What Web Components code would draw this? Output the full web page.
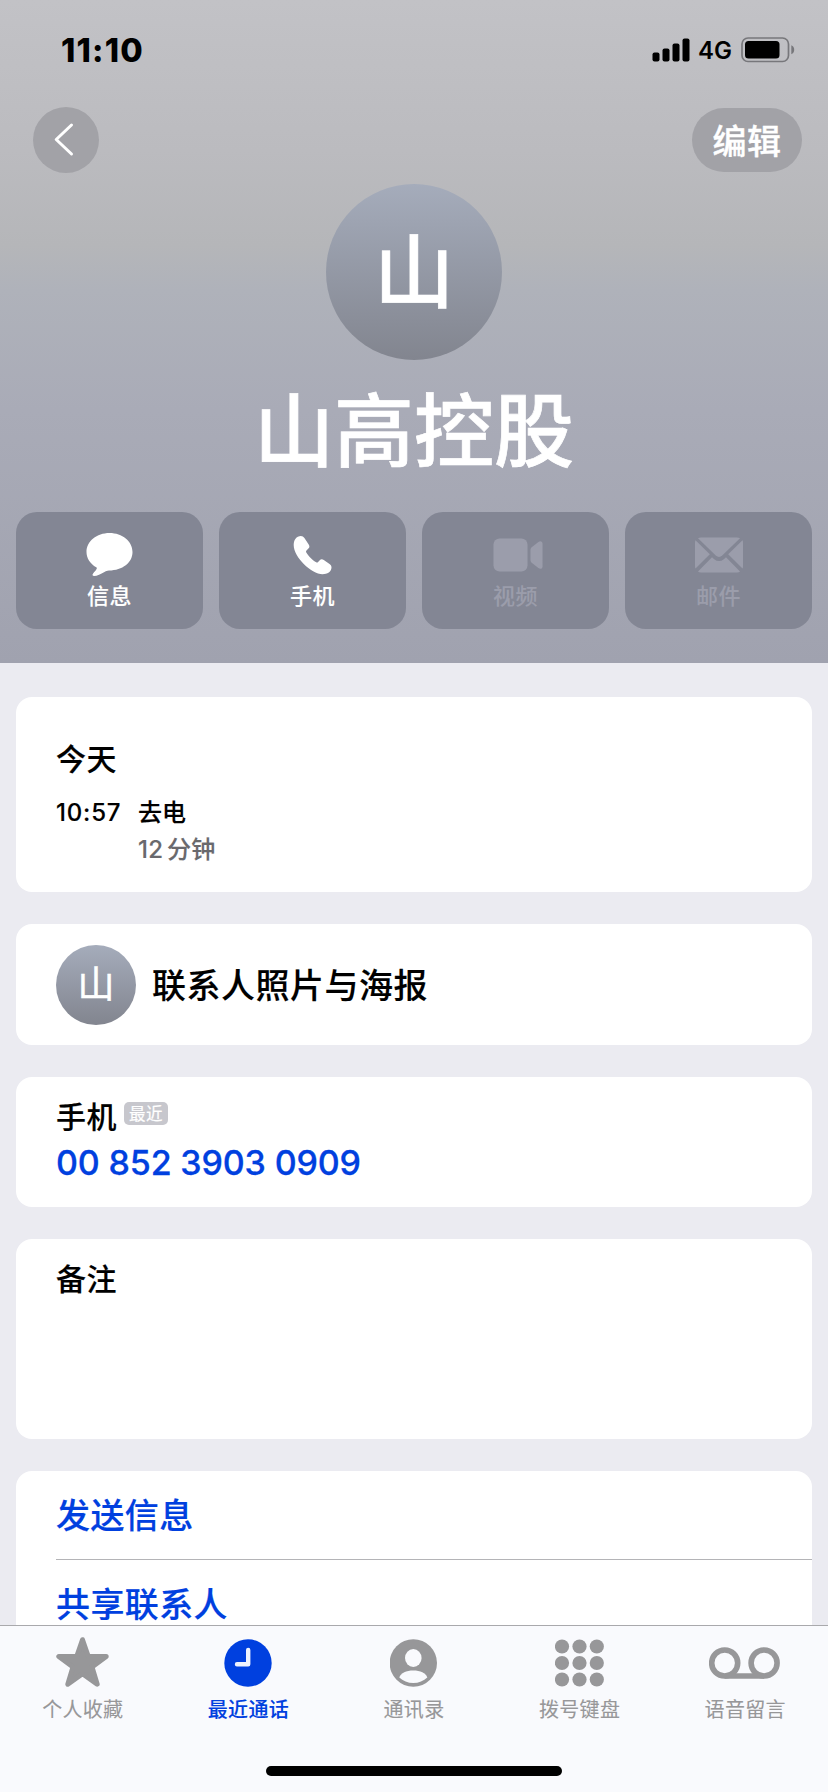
<!DOCTYPE html>
<html lang="zh-CN">
<head>
<meta charset="utf-8">
<meta name="viewport" content="width=device-width, initial-scale=1">
<title>山高控股</title>
<style>
	html, body {
		margin: 0;
		padding: 0;
	}

	body {
		--blue: #0040df;
		--gray: #979799;
		background: #ebebf1;
		color: #000;
		font-family: Inter, "Noto Sans CJK SC", sans-serif;
		height: 1792px;
		overflow: hidden;
	}
</style>
</head>
<body>
<contact-screen>
	<contact-header slot="header" name="山高控股">
		<status-bar slot="status" time="11:10" network="4G"></status-bar>
		<nav-bar slot="nav">编辑</nav-bar>
		<contact-avatar slot="avatar">山</contact-avatar>
		<action-button icon="message">信息</action-button>
		<action-button icon="phone">手机</action-button>
		<action-button icon="video" disabled>视频</action-button>
		<action-button icon="mail" disabled>邮件</action-button>
	</contact-header>

	<info-card style="--h: 195px">
		<call-log day="今天" time="10:57" kind="去电"><span>12</span> 分钟</call-log>
	</info-card>
	<info-card style="--h: 121px">
		<poster-row>
			<contact-avatar slot="avatar" small>山</contact-avatar>
			联系人照片与海报
		</poster-row>
	</info-card>
	<info-card style="--h: 130px">
		<phone-row label="手机" badge="最近">00 852 3903 0909</phone-row>
	</info-card>
	<info-card style="--h: 200px">
		<note-row>备注</note-row>
	</info-card>
	<info-card style="--h: 240px">
		<link-row>发送信息</link-row>
		<link-row>共享联系人</link-row>
	</info-card>

	<tab-bar slot="tabs">
		<tab-item icon="star">个人收藏</tab-item>
		<tab-item icon="clock" active>最近通话</tab-item>
		<tab-item icon="person">通讯录</tab-item>
		<tab-item icon="keypad">拨号键盘</tab-item>
		<tab-item icon="voicemail">语音留言</tab-item>
	</tab-bar>
</contact-screen>

<script>
const icons = {
	message: `<svg width="48" height="46" viewBox="0.5 0 48 46" fill="currentColor">
		<path d="M24 1C36.800 1 47 9.300 47 20C47 30.700 37 38.300 23.500 38.500C21.400 38.600 20.400 39.100 18.500 40.200C15.600 42 11.500 44 8.700 44C6.900 44 6.500 42.600 7.600 41.400C9.200 39.700 10.600 38.300 11.300 36.600C11.500 36 11.300 35.700 10.700 35.300C4.700 31.800 1 26.300 1 20C1 9.300 11.200 1 24 1Z"/></svg>`,
	phone: `<svg width="40" height="40" viewBox="0.500 0 40 40" fill="currentColor">
		<path d="M2.500 4.400C4 2.200 6.600 1.100 8.300 1.100C9.900 1.100 11 1.800 11.900 3.100L16.200 9.400C17.300 11.100 17.100 12.300 15.900 13.500L14 15.400C13.400 16 13.400 16.700 13.800 17.400C14.700 19.100 16.600 21.300 18.200 22.900C19.800 24.500 22 26.300 23.700 27.200C24.400 27.600 25 27.500 25.600 26.900L27 25.400C28.300 24 29.700 23.900 31.300 25L37 29C38.400 30 39 31 39 32.400C39 34 38 36.300 36.300 37.600C34.600 38.800 32.400 39.200 30 39.200C24.500 39.200 16.800 34.500 11.500 29.200C6 23.700 1.200 16.100 1.200 10.200C1.200 8 1.500 5.900 2.500 4.400Z"/></svg>`,
	video: `<svg width="54" height="34" viewBox="-4 0 54 34" fill="currentColor">
		<rect x="0.500" y="0.500" width="34" height="33" rx="6"/>
		<path d="M37.500 12C37.500 10.800 37.900 10 38.700 9.300L45.400 3.900C47.300 2.400 49.500 3.200 49.500 5.600V28.400C49.500 30.800 47.300 31.600 45.400 30.100L38.700 24.700C37.900 24 37.500 23.200 37.500 22Z"/></svg>`,
	mail: `<svg width="50" height="36" viewBox="0 0 50 36" fill="currentColor">
		<path d="M4 1.200Q5.300.500 7 .500H43Q44.700.500 46 1.200L28.200 18.600Q25 21.500 21.800 18.600Z"/>
		<path d="M1.500 3.300L15.800 17.300L1.500 31.600Q1 31.200 1 29V6Q1 4 1.500 3.300Z"/>
		<path d="M48.500 3.300L34.200 17.300L48.500 31.600Q49 31.200 49 29V6Q49 4 48.500 3.300Z"/>
		<path d="M4 34.500L18 20.200L20.200 22.200Q25 26 29.800 22.200L32 20.200L46 34.500Q45 35.500 43 35.500H7Q5 35.500 4 34.500Z"/></svg>`,
	star: `<svg width="54" height="52" viewBox="0.500 0 54 52" fill="currentColor" stroke="currentColor" stroke-width="5" stroke-linejoin="round">
		<path d="M27 2.700L32.700 19.400H50.700L36.500 30L41.700 47.200L27 36.800L12.300 47.200L17.500 30L3.300 19.400H21.300Z"/></svg>`,
	clock: `<svg width="48" height="48" viewBox="0 0 48 48">
		<circle cx="24" cy="24" r="23.700" fill="currentColor"/>
		<path d="M24.200 11V25.200H13" fill="none" stroke="#eef3fe" stroke-width="4.400" stroke-linecap="round" stroke-linejoin="round"/></svg>`,
	person: `<svg width="48" height="48" viewBox="0.700 0 48 48">
		<circle cx="24" cy="24" r="23.700" fill="currentColor"/>
		<ellipse cx="24" cy="19" rx="8.300" ry="9" fill="#f9fafd"/>
		<path d="M10 38.500C11.600 34.200 17 31.600 24 31.600C31 31.600 36.400 34.200 38 38.500C34.400 42 29.400 44 24 44C18.600 44 13.600 42 10 38.500Z" fill="#f9fafd"/></svg>`,
	keypad: `<svg width="50" height="48" viewBox="1 0 50 48" fill="currentColor">
		${[8, 25.5, 42.8].map(x => [7.5, 24, 40.5].map(y => `<circle cx="${x}" cy="${y}" r="7.100"/>`).join('')).join('')}</svg>`,
	voicemail: `<svg width="72" height="48" viewBox="0.500 0 72 48" fill="none" stroke="currentColor" stroke-width="5.600">
		<circle cx="16.200" cy="24" r="13"/>
		<circle cx="55.600" cy="24" r="13"/>
		<path d="M16.200 37H55.600"/></svg>`
};

class BaseElement extends HTMLElement {
	constructor() {
		super();
		this.shadow = this.attachShadow({mode: 'open'});
	}

	connectedCallback() {
		this.shadow.innerHTML = this.template;
	}

	attr(name) {
		return this.getAttribute(name) || '';
	}
}

class ContactScreen extends BaseElement {
	get template() {
		return `
			<style>
				:host {
					display: flex;
					flex-direction: column;
					height: 1792px;
					overflow: hidden;
				}

				.scroll {
					display: flex;
					flex: 1;
					flex-direction: column;
					min-height: 0;
					overflow: hidden;
				}

				.cards {
					display: flex;
					flex-direction: column;
					gap: 32px;
					padding: 34px 16px 0;
				}
			</style>
			<div class="scroll">
				<slot name="header"></slot>
				<div class="cards"><slot></slot></div>
			</div>
			<slot name="tabs"></slot>
		`;
	}
}

class ContactHeader extends BaseElement {
	get template() {
		return `
			<style>
				:host {
					align-items: center;
					background: linear-gradient(180deg, #c2c2c6 0, #bbbbbf 150px, #b5b6b9 245px, #afb2ba 290px, #a9abb7 410px, #a0a2af 100%);
					box-sizing: border-box;
					display: flex;
					flex: none;
					flex-direction: column;
					height: 663px;
				}

				.name {
					-webkit-text-stroke: .700px #fff;
					color: #fff;
					font-size: 80px;
					font-weight: 500;
					line-height: 100px;
					margin: 21px 0 31px;
				}

				.actions {
					align-self: stretch;
					display: grid;
					gap: 16px;
					grid-template-columns: repeat(4, 1fr);
					padding: 0 16px;
				}
			</style>
			<slot name="status"></slot>
			<slot name="nav"></slot>
			<slot name="avatar"></slot>
			<div class="name">${this.attr('name')}</div>
			<div class="actions"><slot></slot></div>
		`;
	}
}

class StatusBar extends BaseElement {
	get template() {
		return `
			<style>
				:host {
					align-items: center;
					align-self: stretch;
					box-sizing: border-box;
					display: flex;
					height: 99px;
					justify-content: space-between;
					padding: 0 33px 0 61px;
				}

				.time {
					font-size: 32.500px;
					font-weight: 800;
					letter-spacing: 1.200px;
					padding-top: 1px;
				}

				.right {
					align-items: center;
					display: flex;
				}

				.net {
					font-size: 24px;
					font-weight: 600;
					line-height: 28px;
					margin: 2px 9px 0 8px;
				}
			</style>
			<div class="time">${this.attr('time')}</div>
			<div class="right">
				<svg width="38" height="24" viewBox="0 0 38 24">
					<rect x="0.500" y="14.500" width="7" height="9" rx="2"/>
					<rect x="10.500" y="10.500" width="7" height="13" rx="2"/>
					<rect x="20.500" y="5.500" width="7" height="18" rx="2"/>
					<rect x="30.500" y="0.500" width="7" height="23" rx="2"/>
				</svg>
				<div class="net">${this.attr('network')}</div>
				<svg width="54" height="26" viewBox="0 0 54 26">
					<rect x="1" y="1" width="46.500" height="23.500" rx="6" fill="none" stroke="#77777b" stroke-width="1.700"/>
					<rect x="4" y="4" width="34.500" height="17.500" rx="3.500"/>
					<path d="M50.300 8.300Q53.200 9.500 53.200 12.800T50.300 17.300Z" fill="#77777b"/>
				</svg>
			</div>
		`;
	}
}

class NavBar extends BaseElement {
	get template() {
		return `
			<style>
				:host {
					align-items: center;
					align-self: stretch;
					box-sizing: border-box;
					color: #fff;
					display: flex;
					height: 85px;
					justify-content: space-between;
					padding: 0 26px 3px 33px;
				}

				.back, .edit {
					align-items: center;
					background: #a2a2a7;
					border-radius: 33px;
					box-sizing: border-box;
					display: flex;
					height: 66px;
					justify-content: center;
					width: 66px;
				}

				.edit {
					-webkit-text-stroke: .400px #fff;
					font-size: 34px;
					font-weight: 500;
					height: 64px;
					letter-spacing: .4px;
					padding-bottom: 2px;
					width: 110px;
				}
			</style>
			<div class="back">
				<svg width="66" height="66" viewBox="0 0 66 66" fill="none" stroke="#fff" stroke-width="3" stroke-linecap="round" stroke-linejoin="round">
					<path d="M38.500 18L23.200 32.500L38.500 47"/>
				</svg>
			</div>
			<div class="edit"><slot></slot></div>
		`;
	}
}

class ContactAvatar extends BaseElement {
	get template() {
		return `
			<style>
				:host {
					-webkit-text-stroke: .500px #fff;
					align-items: center;
					background: linear-gradient(180deg, #a5acbb, #82858f);
					border-radius: 50%;
					color: #fff;
					display: flex;
					flex: none;
					font-size: 80px;
					font-weight: 500;
					height: 176px;
					justify-content: center;
					line-height: 1;
					width: 176px;
				}

				:host([small]) {
					font-size: 37px;
					font-weight: 400;
					height: 80px;
					letter-spacing: 0;
					width: 80px;
				}
			</style>
			<slot></slot>
		`;
	}
}

class ActionButton extends BaseElement {
	get template() {
		return `
			<style>
				:host {
					-webkit-text-stroke: .100px currentColor;
					align-items: center;
					background: #838694;
					border-radius: 21px;
					box-sizing: border-box;
					color: #fff;
					display: flex;
					flex-direction: column;
					font-size: 22px;
					font-weight: 500;
					height: 117px;
					letter-spacing: .4px;
					line-height: 26px;
					padding-top: 17px;
				}

				:host([disabled]) {
					color: #9b9dab;
				}

				.icon {
					align-items: center;
					display: flex;
					height: 52px;
					margin-bottom: 2px;
				}
			</style>
			<div class="icon">${icons[this.attr('icon')]}</div>
			<div><slot></slot></div>
		`;
	}
}

class InfoCard extends BaseElement {
	get template() {
		return `
			<style>
				:host {
					-webkit-text-stroke: .150px currentColor;
					background: #fff;
					border-radius: 16px;
					box-sizing: border-box;
					display: block;
					flex: none;
					height: var(--h);
					padding-left: 40px;
				}
			</style>
			<slot></slot>
		`;
	}
}

class CallLog extends BaseElement {
	get template() {
		return `
			<style>
				:host {
					display: block;
					padding-top: 42px;
				}

				.day {
					font-size: 30px;
					font-weight: 500;
					letter-spacing: .5px;
					line-height: 40px;
				}

				.call {
					display: grid;
					font-size: 24px;
					font-weight: 500;
					grid-template-columns: 82px 1fr;
					line-height: 37px;
					margin-top: 15px;
				}

				.time {
					letter-spacing: .8px;
				}

				.length {
					color: #69696d;
					grid-column: 2;
					letter-spacing: .3px;
					word-spacing: -3px;
				}
			</style>
			<div class="day">${this.attr('day')}</div>
			<div class="call">
				<div class="time">${this.attr('time')}</div>
				<div>${this.attr('kind')}</div>
				<div class="length"><slot></slot></div>
			</div>
		`;
	}
}

class PosterRow extends BaseElement {
	get template() {
		return `
			<style>
				:host {
					align-items: center;
					display: flex;
					font-size: 34px;
					font-weight: 500;
					gap: 16px;
					height: 121px;
					letter-spacing: .5px;
				}

				.title {
					padding-bottom: 2px;
				}
			</style>
			<slot name="avatar"></slot>
			<div class="title"><slot></slot></div>
		`;
	}
}

class PhoneRow extends BaseElement {
	get template() {
		return `
			<style>
				:host {
					display: block;
					padding-top: 20px;
				}

				.label {
					display: flex;
					font-size: 30px;
					font-weight: 500;
					gap: 7px;
					letter-spacing: .5px;
					line-height: 40px;
				}

				.badge {
					-webkit-text-stroke: .200px #fff;
					background: #c7c7cd;
					border-radius: 5px;
					color: #fff;
					font-size: 16.500px;
					font-weight: 400;
					height: 23px;
					letter-spacing: .4px;
					line-height: 25px;
					margin-top: 5px;
					text-align: center;
					width: 44px;
				}

				.number {
					-webkit-text-stroke: .300px var(--blue);
					color: var(--blue);
					font-size: 34px;
					font-weight: 500;
					letter-spacing: -.15px;
					line-height: 44px;
					margin-top: 4px;
				}
			</style>
			<div class="label">${this.attr('label')}<span class="badge">${this.attr('badge')}</span></div>
			<div class="number"><slot></slot></div>
		`;
	}
}

class NoteRow extends BaseElement {
	get template() {
		return `
			<style>
				:host {
					display: block;
					font-size: 30px;
					font-weight: 500;
					letter-spacing: .5px;
					line-height: 40px;
					padding-top: 20px;
				}
			</style>
			<slot></slot>
		`;
	}
}

class LinkRow extends BaseElement {
	get template() {
		return `
			<style>
				:host {
					-webkit-text-stroke: .200px var(--blue);
					border-bottom: 1px solid #b4b4b7;
					color: var(--blue);
					display: block;
					font-size: 34px;
					font-weight: 500;
					height: 88px;
					letter-spacing: .4px;
					line-height: 90px;
				}
			</style>
			<slot></slot>
		`;
	}
}

class TabBar extends BaseElement {
	get template() {
		return `
			<style>
				:host {
					align-items: center;
					background: #f9fafd;
					border-top: 1px solid #a9a9ac;
					box-sizing: border-box;
					display: flex;
					flex: none;
					flex-direction: column;
					height: 167px;
					justify-content: space-between;
					padding-bottom: 16px;
				}

				.tabs {
					align-self: stretch;
					display: grid;
					grid-template-columns: repeat(5, 1fr);
				}

				.home {
					background: #000;
					border-radius: 5px;
					height: 10px;
					width: 296px;
				}
			</style>
			<div class="tabs"><slot></slot></div>
			<div class="home"></div>
		`;
	}
}

class TabItem extends BaseElement {
	get template() {
		return `
			<style>
				:host {
					-webkit-text-stroke: .100px currentColor;
					align-items: center;
					color: var(--gray);
					display: flex;
					flex-direction: column;
					font-size: 20px;
					letter-spacing: .3px;
					line-height: 26px;
					padding-top: 10px;
				}

				:host([active]) {
					color: var(--blue);
					font-weight: 500;
				}

				.icon {
					align-items: center;
					display: flex;
					height: 54px;
					margin-bottom: 7px;
				}
			</style>
			<div class="icon">${icons[this.attr('icon')]}</div>
			<div><slot></slot></div>
		`;
	}
}

customElements.define('contact-screen', ContactScreen);
customElements.define('contact-header', ContactHeader);
customElements.define('status-bar', StatusBar);
customElements.define('nav-bar', NavBar);
customElements.define('contact-avatar', ContactAvatar);
customElements.define('action-button', ActionButton);
customElements.define('info-card', InfoCard);
customElements.define('call-log', CallLog);
customElements.define('poster-row', PosterRow);
customElements.define('phone-row', PhoneRow);
customElements.define('note-row', NoteRow);
customElements.define('link-row', LinkRow);
customElements.define('tab-bar', TabBar);
customElements.define('tab-item', TabItem);
</script>
</body>
</html>
